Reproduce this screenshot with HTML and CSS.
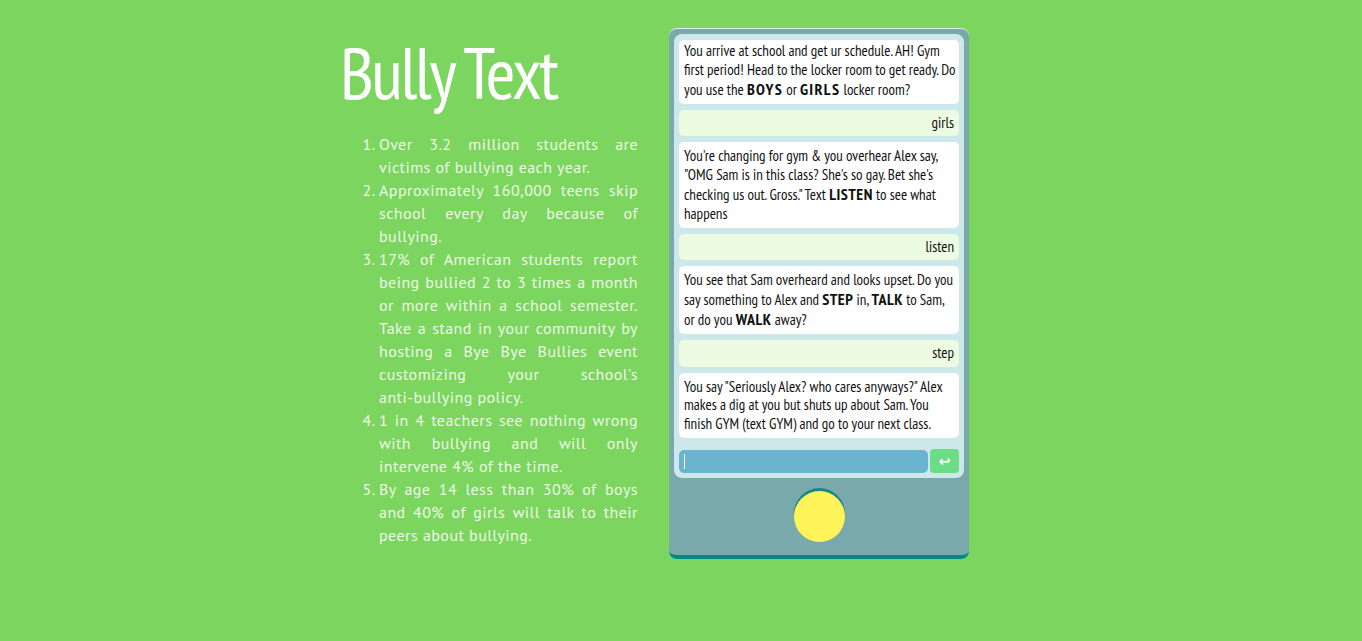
FILE: index.html
```html
<!DOCTYPE html>
<html lang="en">
<head>
<meta charset="utf-8">
<title>Bully Text</title>
<link rel="stylesheet" href="styles.css">
</head>
<body>
<div class="page">
  <section class="info">
    <h1 class="title">Bully Text</h1>
    <ol class="facts">
      <li>Over 3.2 million students are victims of bullying each year.</li>
      <li>Approximately 160,000 teens skip school every day because of bullying.</li>
      <li>17% of American students report being bullied 2 to 3 times a month or more within a school semester. Take a stand in your community by hosting a Bye Bye Bullies event customizing your school's <span class="nowrap">anti-bullying</span> policy.</li>
      <li>1 in 4 teachers see nothing wrong with bullying and will only intervene 4% of the time.</li>
      <li>By age 14 less than 30% of boys and 40% of girls will talk to their peers about bullying.</li>
    </ol>
  </section>
  <section class="phone">
    <div class="screen">
      <div class="chat">
        <div class="msg">You arrive at school and get ur schedule. AH! Gym first period! Head to the locker room to get ready. Do you use the <b class="wide">BOYS</b> or <b class="wide">GIRLS</b> locker room?</div>
        <div class="reply">girls</div>
        <div class="msg">You're changing for gym &amp; you overhear Alex say, "OMG Sam is in this class? She's so gay. Bet she's checking us out. Gross." Text <b>LISTEN</b> to see what happens</div>
        <div class="reply">listen</div>
        <div class="msg">You see that Sam overheard and looks upset. Do you say something to Alex and <b>STEP</b> in, <b>TALK</b> to Sam, or do you <b>WALK</b> away?</div>
        <div class="reply">step</div>
        <div class="msg">You say "Seriously Alex? who cares anyways?" Alex makes a dig at you but shuts up about Sam. You finish GYM (text GYM) and go to your next class.</div>
      </div>
      <form class="composer">
        <div class="field"><span class="caret"></span></div>
        <button type="button" class="send">&#8617;</button>
      </form>
    </div>
    <div class="home-row">
      <div class="home"></div>
    </div>
  </section>
</div>
</body>
</html>
```

FILE: styles.css
```css
html, body {
  margin: 0;
  padding: 0;
}
body {
  background: #7bd55f;
  min-height: 641px;
}
.page {
  display: flex;
  align-items: flex-start;
  padding: 28px 0 0 340px;
  gap: 31px;
}
.info {
  width: 298px;
}
.title {
  margin: 5px 0 0 0;
  font-family: "PT Sans Narrow", "Liberation Sans Narrow", "DejaVu Sans Condensed", sans-serif;
  font-weight: normal;
  font-size: 72px;
  line-height: 80px;
  letter-spacing: -2.3px;
  color: #ffffff;
}
.facts {
  margin: 20px 0 0 0;
  padding-left: 39px;
  font-family: "PT Sans", "Lato", sans-serif;
  font-size: 16px;
  line-height: 23px;
  letter-spacing: 0.45px;
  color: #eef8e6;
  text-align: justify;
}
.nowrap {
  white-space: nowrap;
}
.phone {
  width: 300px;
  box-sizing: border-box;
  background: #7aa9ac;
  border-top: 1px solid #e2f0ee;
  border-bottom: 4px solid #00888a;
  border-radius: 8px;
  padding: 5px 5px 0 5px;
}
.screen {
  background: #cce8ea;
  border-radius: 8px;
  padding: 6px 5px 5px 5px;
}
.chat {
  height: 398px;
  overflow: hidden;
  display: flex;
  flex-direction: column;
  justify-content: flex-end;
  gap: 6px;
  border-radius: 5px;
  font-family: "PT Sans Narrow", "Liberation Sans Narrow", "DejaVu Sans Condensed", sans-serif;
  font-size: 15px;
  line-height: 18.8px;
  color: #111;
}
.msg, .reply {
  flex: none;
  border-radius: 5px;
}
.msg {
  background: #ffffff;
  padding: 5px 3px 4px 5px;
}
.reply {
  background: #eefbe3;
  text-align: right;
  padding: 4px 5px 4px 5px;
}
.msg b {
  font-size: 16px;
  letter-spacing: 0.5px;
}
.msg b.wide {
  letter-spacing: 1.3px;
}
.composer {
  margin: 11px 0 0 0;
  display: flex;
  gap: 2px;
  align-items: center;
}
.field {
  flex: 1;
  height: 23px;
  background: #6ab4cf;
  border-radius: 5px;
  display: flex;
  align-items: center;
  padding-left: 5px;
}
.caret {
  width: 1px;
  height: 15px;
  background: #ffffff;
}
.send {
  width: 29px;
  height: 24px;
  border: none;
  border-radius: 4px;
  background: #6ddc86;
  color: #ffffff;
  font-family: "DejaVu Sans", sans-serif;
  font-weight: bold;
  font-size: 14px;
  padding: 0;
  line-height: 24px;
}
.home-row {
  display: flex;
  justify-content: center;
  padding: 13px 0 13px 0;
}
.home {
  width: 51px;
  height: 51px;
  border-radius: 50%;
  background: #fff35a;
  box-shadow: 0 -3px 0 #14898b;
}
```
